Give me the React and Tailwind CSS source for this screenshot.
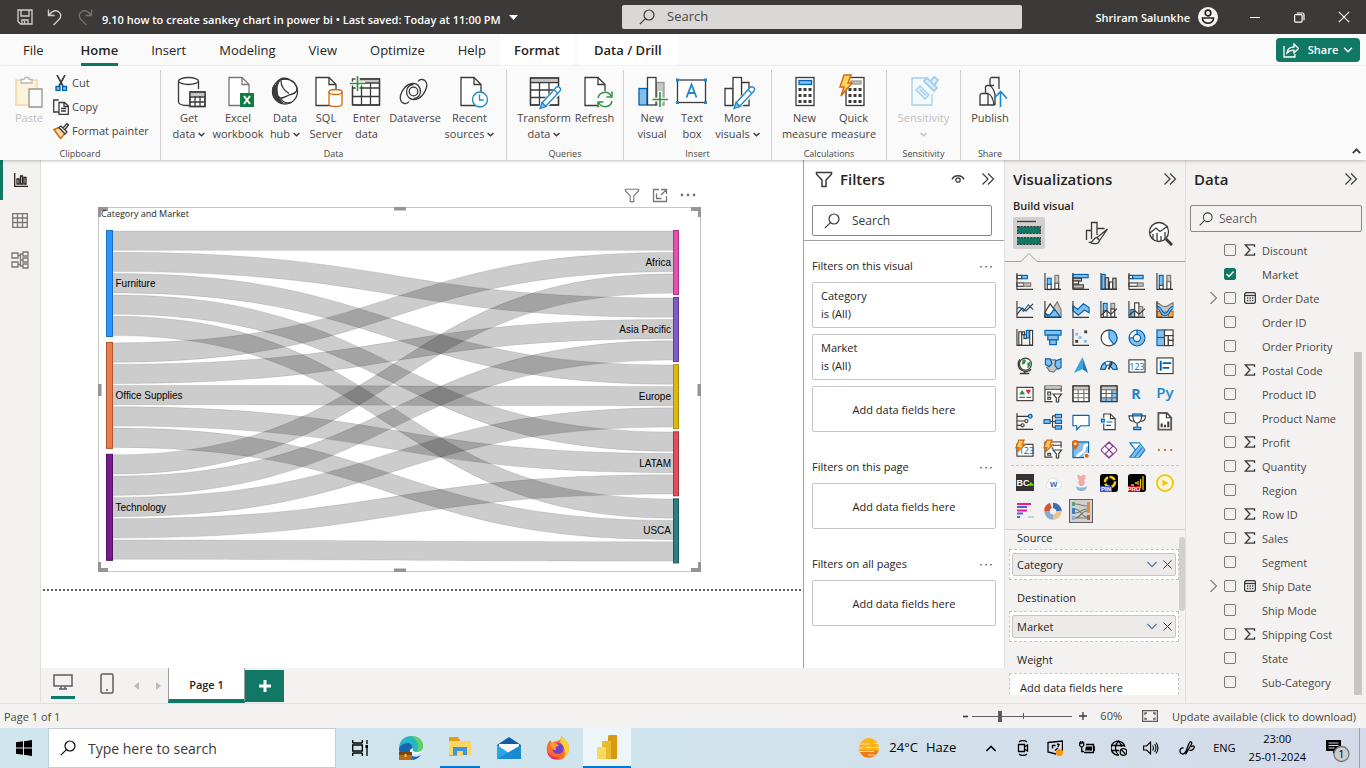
import React from "react";

const K = "#3b3a39";
const B = "#0063b1";
const L = "#83beec";
const G = "#c8c6c4";
const O = "#d8690a";

function Svg({ w = 18, h = w, vb, className = "", children, sw = 1.3, stroke = K }) {
  return (
    <svg
      width={w}
      height={h}
      viewBox={vb || `0 0 ${w} ${h}`}
      fill="none"
      stroke={stroke}
      strokeWidth={sw}
      className={`shrink-0 ${className}`}
      aria-hidden="true"
    >
      {children}
    </svg>
  );
}

const Chevron = ({ w = 7, h = 5, stroke = K, sw = 1.6, className }) => (
  <Svg w={w} h={h} vb="0 0 8 5" stroke={stroke} sw={sw} className={className}>
    <path d="M.7.7 4 4 7.3.7" />
  </Svg>
);

const DoubleChevron = () => (
  <Svg w={14} h={14} sw={1.2}>
    <path d="M1.500 1.500 7 7l-5.500 5.500M7 1.500 12.500 7 7 12.500" />
  </Svg>
);

const SearchIcon = ({ w = 16, stroke = K }) => (
  <Svg w={w} vb="0 0 16 16" stroke={stroke} sw={1.2}>
    <circle cx="10" cy="6" r="5" />
    <path d="M6.400 9.600.8 15.200" />
  </Svg>
);

const Funnel = ({ w = 18, stroke = K, sw = 1.5 }) => (
  <Svg w={w} vb="0 0 18 18" stroke={stroke} sw={sw}>
    <path d="M1.500 2.500h15v1.700L11 10v6.500H7V10L1.500 4.200z" />
  </Svg>
);

/* ---------- ribbon icons ---------- */

const Page = ({ x = 5, c = K }) => (
  <g stroke={c}>
    <path fill="#fff" d={`M${x} 1.500h13l7 7v21H${x}z`} />
    <path d={`M${x + 13} 1.500v7h7`} />
  </g>
);

const Pencil = () => (
  <g>
    <path d="M13 27 27.500 12.500a2.600 2.600 0 0 1 3.700 3.700L16.500 31l-5.200 1.500z" fill="#fafafa" stroke="#fafafa" strokeWidth="3" />
    <path d="M13 27 27 11.500a2.600 2.600 0 0 1 3.700 3.700L16.500 30.500z" fill="#fff" stroke="#1f86cc" />
    <path d="m13 26.500 4 4-6 2z" fill={L} stroke="#1f86cc" />
    <path d="m25 13.500 3.500 3.500" stroke="#1f86cc" />
  </g>
);

const Keypad = ({ x = 6 }) => (
  <g>
    <rect x={x} y="1.500" width="18" height="28" fill="#fff" />
    {[12, 18, 24].map((y) =>
      [3, 8, 13].map((dx) => (
        <rect key={`${y}-${dx}`} x={x + dx - 0.5} y={y} width="3" height="3" fill={K} stroke="none" />
      ))
    )}
  </g>
);

const ribbonIcons = {
  get: (
    <>
      <path d="M1.500 5v21c0 2 4 3.500 10.500 3.500M21.500 13V5" />
      <ellipse cx="11.500" cy="5" rx="10" ry="3.500" fill="#fff" />
      <rect x="13" y="16" width="15" height="14.500" fill="#fff" />
      <path d="M13 18.500h15" stroke={G} strokeWidth="3" />
      <path d="M13 16h15v14.500H13zM13 21h15M13 26h15M18 20v10M23 20v10" />
    </>
  ),
  excel: (
    <>
      <Page x={3} c="#797775" />
      <rect x="14" y="17" width="14" height="14" fill="#107c41" stroke="none" />
      <path d="m18 20 6 8M24 20l-6 8" stroke="#fff" strokeWidth="2" />
    </>
  ),
  hub: (
    <>
      <circle cx="15" cy="15.500" r="12.500" fill="#fff" />
      <path d="M13 1.500c5 0 6.500 1 8 3-4-1.500-8-1-10 0-3 2-4 7-3 13 .5 4 3 7 6 10C8 28 2 22.500 2 15.500c0-4 1-6 4-7 0-3 3-6.500 7-7z" fill={K} stroke="none" />
      <path d="M11 4.500c0 5 3 10 8 13M27 13.500c-1 5-5 4-9 6s-7 4-10 1.500M21 4.500c3 1 5.500 4 6 9M8.500 20c3 5.500 8 8.500 13 6" />
    </>
  ),
  sql: (
    <>
      <Page x={3} />
      <path d="M16 16v12c0 1.500 2.500 2.500 6.500 2.500S29 29.500 29 28V16z" fill="#fff" stroke={O} />
      <ellipse cx="22.500" cy="16" rx="6.500" ry="2.500" fill="#fff" stroke={O} />
    </>
  ),
  enter: (
    <>
      <rect x="2.500" y="3" width="27" height="26" fill="#fff" />
      <path d="M9 5h20" stroke={G} strokeWidth="3" />
      <path d="M2.500 29h27V3H10M2.500 12v17M2.500 20.500h27M2.500 12h27M11.500 7v22M20.500 7v22M10 7h20" />
      <path d="M7.500 0v16M0 7.500h15" stroke="#fafafa" strokeWidth="4" />
      <path d="M7.500 0v15M0 7.500h15" stroke="#2d9444" strokeWidth="1.600" />
    </>
  ),
  dataverse: (
    <>
      <circle cx="15.500" cy="15.500" r="4.300" />
      <path d="M15.500 8.500a7 7 0 0 0-7 7c0 5 3.500 8.500 8 8 6-.5 10.500-6 12-12 1-4-.5-7.500-4-8-2-.3-3.500.5-4.500 2" />
      <path d="M15.500 22.500a7 7 0 0 0 7-7c0-5-3.500-8.500-8-8-6 .5-10.500 6-12 12-1 4 .5 7.500 4 8 2 .3 3.500-.5 4.500-2" />
    </>
  ),
  recent: (
    <>
      <Page x={3} />
      <circle cx="22" cy="23.500" r="7.500" fill="#fff" stroke="#1f86cc" />
      <path d="M21.500 18.500v5.500h4" stroke="#1f86cc" />
    </>
  ),
  transform: (
    <>
      <rect x="1.500" y="2" width="28" height="27" fill="#fff" />
      <path d="M2 4h27" stroke={G} strokeWidth="3" />
      <path d="M1.500 2h28v27h-28zM1.500 6.500h28M1.500 14h28M1.500 21.500h28M10.500 6.500v22.500M20 6.500v22.500" />
      <Pencil />
    </>
  ),
  refresh: (
    <>
      <Page x={2} />
      <circle cx="22" cy="23.500" r="8.500" fill="#fafafa" stroke="none" />
      <path d="M15 22a7 7 0 0 1 13-2M29 15.500V21h-5.500M29 25a7 7 0 0 1-13 2M15 31.500V26h5.500" stroke="#2d9444" strokeWidth="1.500" />
    </>
  ),
  visual: (
    <>
      <rect x="19" y="6.500" width="8" height="22.500" fill={G} stroke="#979593" />
      <rect x="2" y="12.500" width="8" height="16.500" fill={L} stroke={B} />
      <rect x="10.500" y="1.500" width="8.500" height="27.500" fill="#fff" />
      <path d="M23 15v16M15 23.500h16" stroke="#fafafa" strokeWidth="4" />
      <path d="M23 16v15M15.500 23.500H31" stroke="#2d9444" strokeWidth="1.600" />
    </>
  ),
  text: (
    <>
      <rect x="1.500" y="4" width="28" height="22.500" fill="#fff" />
      {[[0, 2.500], [28, 2.500], [0, 25], [28, 25]].map(([x, y]) => (
        <rect key={`${x}${y}`} x={x} y={y} width="3" height="3" fill="#1f86cc" stroke="none" />
      ))}
      <path d="M10.500 21.500 15.500 8.500l5 13M12.300 17h6.400" stroke="#1f86cc" strokeWidth="1.800" />
    </>
  ),
  more: (
    <>
      <path d="M2 12.500h8v17H2zM18.500 6.500h7.500v23h-7.500z" fill="#fff" />
      <rect x="10" y="1.500" width="8.500" height="28" fill="#fff" />
      <Pencil />
    </>
  ),
  measure: (
    <>
      <Keypad />
      <rect x="9" y="4.500" width="12.500" height="4" fill={L} stroke={B} />
    </>
  ),
  quick: (
    <>
      <Keypad x={7} />
      <rect x="12" y="5" width="10" height="3" fill={G} stroke="#979593" />
      <path d="M5-1h7L9 7h4L2 20l3-9H1z" fill="#fdd663" stroke={O} strokeWidth="1.500" />
    </>
  ),
  sensitivity: (
    <g stroke="#a6cfe8">
      <path d="M17 2H3v27h20V18" fill="#f3f9fd" />
      <path d="m11 10 9 9-4 4-9-9zM11 13.500l6 6" fill="#e1f0fa" />
      <path d="m15 5 10 10 3-3L18 2zM21 6l4-5 4 3-4 6" fill="#e1f0fa" strokeWidth="2" />
    </g>
  ),
  publish: (
    <>
      <path d="M2 19.500a2 2 0 0 1 2-2h6v11.500H2zM7.500 17.500v-6a2 2 0 0 1 2-2h6.500M12 9.500v-6a2 2 0 0 1 2-2h7V13M10 17.500c3 1 5 4 6 11.500H4M11 9.500c3 1 5 4 6 9V29" />
      <path d="M22.500 31V16M16 22.500l6.500-7 6.500 7" stroke="#1f86cc" strokeWidth="1.600" />
    </>
  ),
};

const ICON_VIEW = {
  get: "-4 0 32 33",
  excel: "-4 0 32 33",
  sql: "-3 0 32 33",
  recent: "-4 0 32 33",
  refresh: "-4 0 32 33",
  publish: "-4 0 32 33",
  enter: "1 0 32 33",
  dataverse: "1 0 32 33",
  text: "0 0 32 33",
};

const ribbonGroups = [
  {
    name: "Data",
    pad: "pl-1 pr-[9px]",
    items: [
      ["get", "w-12", "Get", "data", true],
      ["excel", "w-[50px]", "Excel", "workbook"],
      ["hub", "w-11", "Data", "hub", true],
      ["sql", "w-[38px]", "SQL", "Server"],
      ["enter", "w-[43px]", "Enter", "data"],
      ["dataverse", "w-[54px]", "Dataverse", ""],
      ["recent", "w-[55px]", "Recent", "sources", true],
    ],
  },
  {
    name: "Queries",
    pad: "pl-[9px] pr-[6px]",
    items: [
      ["transform", "w-14", "Transform", "data", true],
      ["refresh", "w-[45px]", "Refresh", ""],
    ],
  },
  {
    name: "Insert",
    pad: "px-2",
    items: [
      ["visual", "w-10", "New", "visual"],
      ["text", "w-10", "Text", "box"],
      ["more", "w-[51px]", "More", "visuals", true],
    ],
  },
  {
    name: "Calculations",
    pad: "px-2",
    items: [
      ["measure", "w-[49px]", "New", "measure"],
      ["quick", "w-[49px]", "Quick", "measure"],
    ],
  },
  { name: "Sensitivity", pad: "px-1", items: [["sensitivity", "w-[65px]", "Sensitivity", "", true, true]] },
  { name: "Share", pad: "px-1", items: [["publish", "w-[50px]", "Publish", ""]] },
];

function RibbonButton({ icon, width, a, b, drop, off }) {
  return (
    <button
      disabled={off}
      className={`flex shrink-0 flex-col items-center whitespace-nowrap text-[11px] leading-4 ${width} ${off ? "text-[#c0bebc]" : "text-[#484644]"}`}
    >
      <Svg w={32} h={33} vb={ICON_VIEW[icon] || "-1 0 32 33"} className="mb-px overflow-visible">
        {ribbonIcons[icon]}
      </Svg>
      <span>{a}</span>
      <span className="flex h-4 items-center gap-[3px]">
        {b}
        {drop && <Chevron stroke={off ? "#c0bebc" : K} />}
      </span>
    </button>
  );
}

function TitleBar() {
  return (
    <header className="flex h-[34px] shrink-0 items-center bg-[#3b3a39] text-white">
      <div className="flex w-[622px] shrink-0 items-center">
        <button aria-label="Save" className="ml-[17px]">
          <Svg w={16} stroke="#d2d0ce">
            <path d="M1 1h14v14H3.500L1 12.500zM4 1v6h8V1M5 15v-4h6v4M7.500 12v3" />
          </Svg>
        </button>
        <button aria-label="Undo" className="ml-[14px]">
          <Svg w={16} h={18} stroke="#d2d0ce" sw={1.4}>
            <path d="M1.500 1.500v6h6M1.800 7.300C5 3 8.500 2 11 3.300c3.500 1.900 3.500 5.700 1 8.200L6.500 17" />
          </Svg>
        </button>
        <button aria-label="Redo" disabled className="mr-[9px] ml-[14px]">
          <Svg w={16} h={18} stroke="#72706e" sw={1.4}>
            <path d="M14.500 1.500v6h-6M14.200 7.300C11 3 7.500 2 5 3.300c-3.500 1.900-3.500 5.700-1 8.200L9.500 17" />
          </Svg>
        </button>
        <span className="pt-[6px] text-[11px] font-semibold whitespace-nowrap">
          9.10 how to create sankey chart in power bi • Last saved: Today at 11:00 PM
        </span>
        <Svg w={9} h={5} className="ml-2">
          <path d="M0 0h9L4.500 5z" fill="#fff" stroke="none" />
        </Svg>
      </div>
      <label className="flex h-6 w-[400px] items-center gap-3 rounded-[2px] bg-[#d9d8d7] px-[17px]">
        <SearchIcon w={16} />
        <input aria-label="Search" placeholder="Search" className="w-full bg-transparent text-[13px] text-black outline-none placeholder:text-[#484644]" />
      </label>
      <div className="ml-auto flex items-center">
        <span className="pt-[2px] text-[11px] font-semibold whitespace-nowrap">Shriram Salunkhe</span>
        <Svg w={20} className="ml-2">
          <circle cx="10" cy="10" r="10" fill="#f3f2f1" stroke="none" />
          <circle cx="10" cy="6" r="2.800" stroke="#252423" strokeWidth="1.700" />
          <path d="M4.500 11h11c0 7-11 7-11 0z" stroke="#252423" strokeWidth="1.700" />
        </Svg>
        <button aria-label="Minimize" className="ml-8">
          <Svg w={10} stroke="#fff" sw={1}><path d="M0 5.500h10" /></Svg>
        </button>
        <button aria-label="Restore" className="ml-[34px]">
          <Svg w={11} stroke="#fff" sw={1.2}>
            <rect x=".6" y="2.600" width="7.500" height="7.500" rx="1" />
            <path d="M2.800 1h5.500c1.200 0 1.700.6 1.700 1.700v5.500" />
          </Svg>
        </button>
        <button aria-label="Close" className="mr-4 ml-[33px]">
          <Svg w={12} stroke="#fff" sw={1.2}><path d="m.8.8 10.400 10.400M11.200.8.8 11.200" /></Svg>
        </button>
      </div>
    </header>
  );
}

const tabs = ["File", "Home", "Insert", "Modeling", "View", "Optimize", "Help"];

function TabRow() {
  return (
    <nav className="flex h-8 shrink-0 items-center bg-[#fafafa] text-[13px] text-[#252423]">
      <div className="flex h-full items-center gap-[33px] pr-[14px] pl-[23px]">
        {tabs.map((t) => (
          <button
            key={t}
            className={`h-8 ${t === "Home" ? "ml-1 border-b-[3px] border-[#117865] pt-1 font-semibold" : "pt-px"}`}
          >
            {t}
          </button>
        ))}
      </div>
      <button className="h-full w-[74px] bg-white pt-px font-semibold">Format</button>
      <button className="ml-1 h-full w-[100px] bg-white pt-px font-semibold">Data / Drill</button>
      <button className="mr-[6px] ml-auto flex h-6 w-[84px] items-center justify-center gap-[5px] rounded bg-[#117865] text-[11px] font-semibold text-white">
        <Svg w={16} h={15} stroke="#fff" className="mr-1">
          <path d="M1 3v11h11v-3M4 10c.5-4 3-6 7-6V1l4.500 4.500L11 10V7.200C8 7 6 7.800 4 10z" />
        </Svg>
        Share
        <Chevron w={10} h={6} stroke="#fff" sw={1.1} />
      </button>
    </nav>
  );
}

function Ribbon() {
  return (
    <section aria-label="Home ribbon" className="relative z-10 flex h-[94px] shrink-0 bg-[#fafafa] pt-1 text-[11px] text-[#484644] shadow-[0_1px_3px_rgba(0,0,0,0.25)]">
      <div className="flex w-[161px] shrink-0 flex-col border-r border-[#d2d0ce]">
        <div className="flex min-h-0 flex-1">
          <button disabled className="flex w-[53px] flex-col items-center pt-[6px] pl-[5px] leading-4 text-[#c0bebc]">
            <Svg w={30} h={32} className="mb-[2px]">
              <path d="M2 4h21v25H2z" fill="#fdf3dc" stroke="#f6d3a0" strokeWidth="1.500" />
              <path d="M7 3.500h3c0-3 5-3 5 0h3V7H7z" fill="#fff" stroke="#bab8b7" />
              <path d="M15 13h13v18H15z" fill="#fafafa" stroke="#979593" />
            </Svg>
            Paste
          </button>
          <div className="flex flex-col pt-px">
            {[
              ["Cut", <>
                <path d="M4 0l6 11M12 0 6 11" strokeWidth="1.600" />
                <path d="M3 11.500h4v3.800H3zM9.500 11.500h4v3.800h-4z" fill={L} stroke={B} />
              </>],
              ["Copy", <path d="M6 13H.7V1h5M6 3.500h5.500L15.300 7v8.300H6zM11 3.500V7.500h4M8 9.500h5M8 12h5" />],
              ["Format painter", <>
                <path d="m1 6.500 5-2 6 6-4.500 5z" fill="#fdd9a5" stroke={O} strokeWidth="1.500" />
                <path d="m6 4.500 2-1.500 6 6-2 2zM10 5l4-4.500 1.500 1.500L12 6.500" fill="#fff" />
              </>],
            ].map(([name, icon]) => (
              <button key={name} className="flex h-6 items-center gap-[3px]">
                <Svg w={16}>{icon}</Svg>
                {name}
              </button>
            ))}
          </div>
        </div>
        <div className="h-3 text-center text-[9px] leading-3">Clipboard</div>
      </div>
      {ribbonGroups.map((g) => (
        <div key={g.name} className="flex shrink-0 flex-col border-r border-[#d2d0ce]">
          <div className={`flex min-h-0 flex-1 items-start pt-[6px] ${g.pad}`}>
            {g.items.map(([icon, width, a, b, drop, off]) => (
              <RibbonButton key={icon} {...{ icon, width, a, b, drop, off }} />
            ))}
          </div>
          <div className="h-3 text-center text-[9px] leading-3">{g.name}</div>
        </div>
      ))}
      <button aria-label="Collapse ribbon" className="mt-auto mr-[5px] mb-[6px] ml-auto">
        <Chevron w={9} h={6} className="rotate-180" />
      </button>
    </section>
  );
}

/* ---------- report canvas ---------- */

const sources = [
  ["Furniture", "#2996ff", "#1a6fc2"],
  ["Office Supplies", "#e67c4f", "#b35529"],
  ["Technology", "#7a1a8c", "#520f60"],
];
const targets = [
  ["Africa", "#e252b0", "#b33388"],
  ["Asia Pacific", "#7f5cc6", "#5a3d9c"],
  ["Europe", "#dcb910", "#a88d08"],
  ["LATAM", "#dc515d", "#a93440"],
  ["USCA", "#2b7d86", "#17575e"],
];
const X0 = 15;
const X1 = 575;
const T = 19.3;

const ribbons = sources.flatMap((_, s) =>
  targets.map((_, t) => {
    const a = 24 + s * 111.9 + t * 21.3;
    const b = 24 + t * 67 + s * 21.4;
    const m = (X0 + X1) / 2;
    return {
      key: `${s}-${t}`,
      area: `M${X0} ${a}C${m} ${a} ${m} ${b} ${X1} ${b}V${b + T}C${m} ${b + T} ${m} ${a + T} ${X0} ${a + T}Z`,
      edges: `M${X0} ${a}C${m} ${a} ${m} ${b} ${X1} ${b}M${X1} ${b + T}C${m} ${b + T} ${m} ${a + T} ${X0} ${a + T}`,
    };
  })
);

function Sankey() {
  return (
    <svg viewBox="0 0 603 365" className="block h-auto w-full" role="img" aria-label="Category and Market sankey chart">
      <rect x=".5" y=".5" width="602" height="364" fill="none" stroke="#c8c6c4" />
      {ribbons.map((r) => (
        <g key={r.key} fill="none">
          <path d={r.area} fill="#000" fillOpacity=".2" />
          <path d={r.edges} stroke="#000" strokeOpacity=".1" />
        </g>
      ))}
      {sources.map(([name, c, e], i) => (
        <g key={name}>
          <rect x="8.500" y={23.5 + i * 111.9} width="6" height="106" fill={c} stroke={e} />
          <text x="17.500" y={80 + i * 112} fontFamily="Liberation Sans, Arial, sans-serif" fontSize="10">{name}</text>
        </g>
      ))}
      {targets.map(([name, c, e], i) => (
        <g key={name}>
          <rect x="575.500" y={23.5 + i * 67.1} width="5" height="64" fill={c} stroke={e} />
          <text x="573" y={59 + i * 67} textAnchor="end" fontFamily="Liberation Sans, Arial, sans-serif" fontSize="10">{name}</text>
        </g>
      ))}
      <g stroke="#979593" strokeWidth="4" fill="none">
        <path d="M1 10V2h9M593 2h9v8M1 355v8h9M593 363h9v-8" />
        <path d="M296 1.500h12M296 363.500h12M1.500 177v12M601.500 177v12" />
      </g>
    </svg>
  );
}

function Canvas() {
  return (
    <div className="flex-1 overflow-hidden bg-white">
      <div className="ml-[57px] w-[603px] pt-[25px]">
        <div className="mb-[2px] flex h-5 items-center justify-end gap-3 pr-[5px]">
          <button aria-label="Filters on visual"><Funnel w={16} stroke="#797775" sw={1.3} /></button>
          <button aria-label="Focus mode">
            <Svg w={16} stroke="#797775">
              <path d="M7 2.500H1.500v12h13V9M9 2.500h5.500V7M14.300 2.700 9 8M4.500 6.500v5h5" />
            </Svg>
          </button>
          <button aria-label="More options">
            <Svg w={16}>
              {[2, 8, 14].map((x) => <circle key={x} cx={x} cy="8" r="1.400" fill="#797775" stroke="none" />)}
            </Svg>
          </button>
        </div>
        <div className="relative">
          <h2 className="absolute top-[1px] left-[3px] text-[9px] leading-3 font-medium text-[#252423]">Category and Market</h2>
          <Sankey />
        </div>
      </div>
      <div className="mx-[2px] mt-[17px] border-t-2 border-dotted border-[#605e5c]" />
    </div>
  );
}

function PageTabs() {
  return (
    <div className="flex h-[35px] shrink-0 bg-[#f3f2f1]">
      <button aria-label="Desktop layout" className="mb-1 ml-[10px] flex w-6 flex-col items-center justify-between border-b-[3px] border-[#117865] pt-[6px]">
        <Svg w={20} h={16} stroke="#605e5c" sw={1.5}>
          <path d="M1 1h18v11H1zM6 15h8M8 12v3M12 12v3" />
        </Svg>
      </button>
      <button aria-label="Mobile layout" className="mb-2 ml-[25px] pt-1">
        <Svg w={14} h={21} stroke="#605e5c" sw={1.5}>
          <rect x="1" y="1" width="12" height="19" rx="1.500" /><path d="M6 17h2" />
        </Svg>
      </button>
      <Svg w={5} h={8} className="mt-[14px] ml-[20px]"><path d="M5 0v8L0 4z" fill="#bdbbb9" stroke="none" /></Svg>
      <Svg w={5} h={8} className="mt-[14px] mr-[7px] ml-[17px]"><path d="M0 0v8l5-4z" fill="#bdbbb9" stroke="none" /></Svg>
      <button className="w-[77px] border-x border-b-4 border-x-[#a19f9d] border-b-[#117865] bg-white pt-1 text-[11px] font-semibold text-[#252423]">
        Page 1
      </button>
      <button aria-label="New page" className="mt-[2px] mb-px flex w-[39px] items-center justify-center bg-[#117865]">
        <Svg w={12} stroke="#fff" sw={3}><path d="M6 0v12M0 6h12" /></Svg>
      </button>
    </div>
  );
}

/* ---------- panes ---------- */

const Dots = () => (
  <button aria-label="More options" className="mr-1">
    <Svg w={12} h={4}>
      {[1, 6, 11].map((x) => <rect key={x} x={x - 0.7} y="2" width="1.400" height="1.400" fill="#484644" stroke="none" />)}
    </Svg>
  </button>
);

const AddCard = () => (
  <div className="flex h-[46px] items-center justify-center rounded-[2px] border border-[#c8c6c4] pt-[2px] text-[11px]">Add data fields here</div>
);

function FilterSection({ title, cards = [] }) {
  return (
    <section className="mb-[27px] flex flex-col gap-[6px]">
      <h3 className="mb-[2px] flex h-4 items-center justify-between text-[11px] leading-4">{title}<Dots /></h3>
      {cards.map((c) => (
        <div key={c} className="h-[46px] rounded-[2px] border border-[#c8c6c4] px-2 pt-1 text-[11px] leading-[18px]">
          {c}<br />is (All)
        </div>
      ))}
      <AddCard />
    </section>
  );
}

function FiltersPane() {
  return (
    <aside className="flex w-[202px] shrink-0 flex-col border-x border-l-[#a19f9d] border-r-[#e1dfdd] bg-white text-[#252423]">
      <div className="flex h-[38px] items-center pr-[9px] pl-[11px]">
        <Funnel />
        <h2 className="ml-[7px] text-[15px] font-semibold">Filters</h2>
        <button aria-label="Show filters" className="ml-auto">
          <Svg w={14} h={12}><path d="M1 6.500c2-5 10-5 12 0" /><circle cx="7" cy="7" r="2.200" /></Svg>
        </button>
        <button aria-label="Collapse filters" className="ml-4"><DoubleChevron /></button>
      </div>
      <div className="border-b border-[#a19f9d] px-2 pt-[7px] pb-1">
        <label className="flex h-[31px] w-[180px] items-center gap-3 rounded-[2px] border border-[#8a8886] px-[11px]">
          <SearchIcon />
          <input aria-label="Search filters" placeholder="Search" className="w-full bg-transparent text-xs outline-none placeholder:text-[#3b3a39]" />
        </label>
      </div>
      <div className="px-2 pt-[17px]">
        <FilterSection title="Filters on this visual" cards={["Category", "Market"]} />
        <FilterSection title="Filters on this page" />
        <FilterSection title="Filters on all pages" />
      </div>
    </aside>
  );
}

const axes = <path d="M1 0v17.300h17" />;
const bolt = <path d="M3-1h5.500L6.500 4h3L1 12l2-5H0z" fill="#fdc663" stroke={O} strokeWidth="1.300" />;
const R = (x, y, w, h, f = "#fff", s = K) => (
  <rect key={`${x}-${y}-${w}`} x={x} y={y} width={w} height={h} fill={f} stroke={s} />
);
const T123 = ({ x }) => (
  <text x={x} y="13.200" textAnchor="middle" fontSize="9.500" fontFamily="Open Sans, sans-serif" fill={B} stroke="none">123</text>
);

const vizIcons = [
  <>{R(1, 2.5, 5, 3.5)}{R(6, 2.5, 6, 3.5, L, B)}{R(1, 10.5, 7, 3.5)}{R(8, 10.5, 7.5, 3.5, G, "#797775")}{axes}</>,
  <>{R(3.5, 12, 4, 5.5)}{R(3.5, 5.5, 4, 6.5, L, B)}{R(11.5, 10.5, 4, 6.5)}{R(11.5, 2.5, 4, 8, G, "#797775")}{axes}</>,
  <>{R(1, 1.5, 16, 3.5, L, B)}{R(1, 5.5, 9, 3, G)}{R(1, 8.500, 6, 3)}{R(1, 12.5, 11, 3.5, G)}{axes}</>,
  <>{R(2, 1.5, 3.5, 15.5, L, B)}{R(5.5, 5, 3.5, 12, G)}{R(10, 9.5, 3.5, 7.5)}{R(13.5, 5.5, 3.5, 11.5, G)}{axes}</>,
  <>{R(1, 2.5, 4, 3.5)}{R(5, 2.5, 11, 3.5, L, B)}{R(1, 10.5, 9, 3.5)}{R(10, 10.5, 6, 3.5, G, "#797775")}{axes}</>,
  <>{R(3.5, 13, 4, 4)}{R(3.5, 2.5, 4, 10.5, L, B)}{R(11.5, 9, 4, 8)}{R(11.5, 2.5, 4, 6.5, G, "#797775")}{axes}</>,
  <>{axes}<path d="m1 8 3-1.500 4 4.500L13 4l5 5" stroke={B} /><path d="m1 14 5.500-6.500 4 3L18 3" /></>,
  <><path d="M10 7 14 1l4 8v8h-7z" fill={G} stroke="#797775" /><path d="m1 12 5.500-9L13 12l-4 5H1z" fill="#fff" /><path d="m1 13 4 4h12.500L11 8.500 6 15z" fill={L} stroke={B} />{axes}</>,
  <><path d="m1 5 5 4 6-6 6 4v5.500l-5-3L6.500 15 1 10z" fill={L} stroke={B} />{axes}</>,
  <>{R(3.5, 2.5, 4, 8, L, B)}{R(3.5, 10.5, 4, 6.5)}{R(11.5, 2.5, 4, 6, G, "#797775")}{R(11.5, 8.5, 4, 8.5)}<path d="m1 15 6-5 4.500 4L18 8" />{axes}</>,
  <>{R(3, 9, 4, 8, L, B)}{R(7, 2, 4.500, 15)}{R(11.500, 6, 4, 11, G, "#797775")}<path d="m1 15 6-5 4.500 4L18 8" />{axes}</>,
  <><path d="M1 11h5v6H1zM13 11h5v6h-5z" fill="#f7a64a" stroke={O} /><path d="M1 2c3.500 0 4 4 8.500 4S15 2 18 2v5c-4 0-4 5-8.500 5S6 7 1 7z" fill={G} stroke="#797775" /><path d="M1.500 7c4 0 3.500 7.500 8 7.500S14 7 18 7" stroke={B} strokeWidth="3.500" /><path d="M1.500 7c4 0 3.500 7.500 8 7.500S14 7 18 7" stroke={L} strokeWidth="1.300" />{axes}</>,
  <>{R(3, 3, 3, 14)}{R(6.500, 3, 2.500, 3)}{R(8.500, 6, 2.500, 4)}{R(11, 1.500, 3, 8, L, B)}{R(14.500, 1.500, 3, 15.500)}{axes}</>,
  <>{R(1, 1.500, 17, 5, L, B)}{R(4, 6.5, 11, 5, L, B)}{R(6, 11.5, 7, 5, L, B)}</>,
  <>{axes}{[[5, 13, K], [5, 5.5, L], [8.5, 9, L], [14.5, 3, K], [14, 13, L]].map(([x, y, c]) => <rect key={x + "" + y} x={x - 1.5} y={y - 1.5} width="3" height="3" fill={c} stroke="none" />)}</>,
  <><circle cx="9.500" cy="9.500" r="8.300" fill="#fff" /><path d="M9.500 1.200a8.300 8.300 0 0 1 5 15L9.500 9.500z" fill={L} stroke={B} /></>,
  <><circle cx="9.500" cy="9.500" r="6.200" stroke={L} strokeWidth="4.500" /><path d="M3.400 9A6.200 6.200 0 0 1 9 3.300" stroke="#fff" strokeWidth="4.500" /><circle cx="9.500" cy="9.500" r="8.400" stroke={B} /><circle cx="9.500" cy="9.500" r="3.800" stroke={B} /><path d="M9.500 1v4.500M1 9.500h4.500" stroke={B} /></>,
  <>{R(1, 1, 8, 16.500, L, B)}{R(9, 1, 9, 6)}{R(9, 7, 4, 10.500)}{R(13, 7, 5, 5)}{R(13, 12, 5, 5.500)}<path d="M1 9h8" stroke={B} /></>,
  <><circle cx="10" cy="7.500" r="6.300" fill="#fff" /><path d="M7 3c3-2 4 1 3 3s-3 1-4 3zM12 6l3-1c1 4-1 6-3 7z" fill="#2d9444" stroke="none" /><path d="M4 2.500c-3 4-2 9 2 11.500s8 1 10-1M9 15v2.500M4 17.500h10" strokeWidth="1.500" /></>,
  <><path d="M7 3h5v5l2 4-4 4-4-1-3-4 4-2z" fill={G} stroke="#797775" /><path d="M1.500 2h5l2 5-3 3-4-2zM12.500 4 18 2v9l-3 2-3.500-4z" fill={L} stroke={B} /></>,
  <><path d="M11 0 2 17l9-4z" fill="#33a7dd" stroke="none" /><path d="m11 0 6 17-6-4z" fill="#1a7ab8" stroke="none" /></>,
  <><path d="M1 13a8.500 8.500 0 0 1 17 0h-4a4.500 4.500 0 0 0-9 0z" fill="#fff" /><path d="M1 13a8.500 8.500 0 0 1 4-7l2 4-2 3zM11 5c4 0 7 4 7 8h-4l-4-4z" fill={L} stroke={B} /><path d="M9 13 13 5" strokeWidth="2" /></>,
  <>{R(1, 3, 17, 13)}<T123 x="9.500" /></>,
  <>{R(1, 1, 17, 16.5)}<path d="M5 4v10.500M7 6.500h9M7 11.500h7" stroke={B} strokeWidth="2" /></>,
  <>{R(1, 2.5, 17, 14)}<path d="m6.500 5-3 5h6z" fill="#2d9444" stroke="none" /><path d="m13 10-3-5h6z" fill="#d13438" stroke="none" /><path d="M3.500 13h6M11 13h5" strokeWidth="1" /></>,
  <><path d="M9 17.500H1V1h17v6" fill="#fff" /><path d="M1.500 2.500h16" stroke={G} strokeWidth="2.500" /><path d="M1 4.500h17M4 7.500h3v3H4zM4 13h3v2H4z" /><path d="M9.500 9.500h9l-3 4V18H13v-4.500z" fill="#fff" /></>,
  <>{R(1, 1, 17, 16.5)}<path d="M2 3h15" stroke={G} strokeWidth="3" /><path d="M1 5h17M1 9h17M1 13.500h17M6.500 5v12.500M12.500 5v12.500" stroke="#797775" />{R(1, 1, 17, 16.5, "none")}</>,
  <>{R(1, 1, 17, 16.5)}<path d="M2 3h15" stroke={G} strokeWidth="3" /><path d="M12.500 5H18v12.500h-5.500zM2 13.500h11v3.500H2z" fill={L} stroke="none" /><path d="M1 5h17M1 9h17M1 13.500h17M6.500 5v12.500M12.500 5v12.500" stroke="#605e5c" />{R(1, 1, 17, 16.5, "none")}</>,
  <text x="8.500" y="15" textAnchor="middle" fontSize="15" fontWeight="700" fontFamily="Open Sans, sans-serif" fill="#1f86cc" stroke="none">R</text>,
  <text x="9.500" y="14" textAnchor="middle" fontSize="16" fontWeight="600" fontFamily="Open Sans, sans-serif" fill="#1f86cc" stroke="none">Py</text>,
  <>{axes}<path d="M1 3.500h13M1 8.500h9M1 13h6" /><circle cx="15" cy="3.500" r="2" fill={L} stroke={B} /><circle cx="11" cy="8.500" r="1.600" fill="#fff" /><circle cx="7" cy="13" r="1.600" fill="#fff" /></>,
  <><path d="M6 9h6M9 3v12M9 3h3M9 15h3" />{R(0, 7, 6.500, 4, L, B)}{R(12, 1.5, 6.500, 3.500, L, B)}{R(12, 7.500, 6.500, 3.500, L, B)}{R(12, 13.500, 6.500, 3.500, L, B)}</>,
  <path d="M1 2.500h17v11H9l-4 4v-4H1z" fill="#fff" stroke={B} />,
  <><path d="M4 5V1h7l5 5v11.500H4V11" fill="#fff" /><path d="M11 1v5h5" /><path d="M7 9.500h6M6.500 13h5" stroke={B} />{R(1.500, 6.500, 3, 3, L, B)}</>,
  <><path d="M5 1.500h9.500c0 6-1 9-4.700 9S5 7.500 5 1.500zM5 3H1c0 4 2 6 5 6M14.500 3h4c0 4-2 6-5 6M9.700 10.500V15" fill="#fff" /><path d="M5 1h9.500v2H5zM6 15h7.500v2.500H6z" fill={L} stroke={B} /></>,
  <><path d="M2.500 0h9l4.500 5v12.500H2.500z" fill="#fff" stroke="#605e5c" strokeWidth="2" /><path d="M11 0v5h5" /><path d="M6 15v-4M9.500 15v-2.500M13 15V9" strokeWidth="2.200" /></>,
  <>{R(1, 3.5, 17, 12.500)}<T123 x="11" />{bolt}</>,
  <><path d="M9 17H1V1h17v6" fill="#fff" /><path d="M8 4.500h10M4 13h3v2H4zM8 7.500h2" /><path d="M9.500 9.500h9l-3 4V18H13v-4.500z" fill="#fff" />{bolt}</>,
  <>{R(1, 1, 16.500, 16.500, L, B)}<path d="M6 17c0-5 8-4 7-9 0-3 2-4 4-4" stroke="#fff" strokeWidth="3" /><path d="M3.500-1c4 0 4 4 3 6l-3 5-3-5c-1-2-1-6 3-6z" fill={O} stroke="none" /><circle cx="3.500" cy="3" r="1.400" fill="#fff" stroke="none" /><circle cx="15.500" cy="15.500" r="2.700" fill={O} stroke="#f3f2f1" /></>,
  <><path d="m9.500 1 7.500 7q1.500 1.500 0 3l-7.500 7L2 11Q.5 9.500 2 8z" fill="#fff" stroke="#8b3a97" /><path d="m5.500 5.500 8 8M13.500 5.500l-8 8M9.500 1.500l4 4-4 4-4-4zM9.500 9.500l4 4-4 4-4-4z" stroke="#8b3a97" /></>,
  <><path d="M2 2h10l6 7.500-6 7.500H2l6-7.500z" fill="#fff" stroke="#1f86cc" /><path d="m4 16 9-12 4.500 5.500L11.500 17z" fill={L} stroke="none" /><path d="m2 17 10.500-13M7 17l8-10M2 2l6 7.500M12 17l5-7" stroke="#1f86cc" /></>,
  <>{[3, 9.5, 16].map((x) => <rect key={x} x={x - 1} y="8.500" width="2" height="2" fill={O} stroke="none" />)}</>,
];

const badge = (fill, label) => (
  <>
    <rect y="12" width="12" height="6" fill={fill} stroke="none" />
    <text x="6" y="17.300" textAnchor="middle" fontSize="6" fontWeight="700" fontFamily="Liberation Sans, Arial" fill="#fff" stroke="none">{label}</text>
  </>
);

const customIcons = [
  <><rect x="0" y="0" width="18" height="17" fill="#333" stroke="none" /><text x="7" y="12" textAnchor="middle" fontSize="9" fontWeight="700" fontFamily="Liberation Sans, Arial" fill="#fff" stroke="none">BC</text><path d="m13 11 2-2 2 2z" fill="#5ee000" stroke="#5ee000" /></>,
  <><path d="M5 15a4 4 0 0 1-1-7c0-4 7-6 9-1 5 0 6 7 1 8z" fill="#fff" stroke="#dfe6ec" /><text x="9.500" y="13" textAnchor="middle" fontSize="9" fontWeight="700" fontFamily="Open Sans, sans-serif" fill="#4a78b5" stroke="none">w</text></>,
  <><path d="M5.500 1h2l1.500 1.500L10.500 1h3v3L12 6.500 13 9l-2 3H8L6 9l1-2.500L5.500 4z" fill="#f2aaa2" stroke="none" /><path d="M4 12c2 2 9 2 11 0 0 3-2 5-5.500 5S4 15 4 12z" fill="#8fb4d9" stroke="none" /></>,
  <><rect width="18" height="18" rx="3" fill="#000" stroke="none" /><circle cx="10" cy="8" r="5" stroke="#f2c811" strokeWidth="2.500" strokeDasharray="6 1.500" />{badge("#2458d8", "PIN")}</>,
  <><rect width="18" height="18" rx="3" fill="#000" stroke="none" /><path d="M3 11h3M7 9h2M10 7v4M12.500 5v9M15 2v14" stroke="#f2c811" strokeWidth="1.300" />{badge("#e3000f", "PRO")}</>,
  <><circle cx="9" cy="9" r="8" stroke="#f2c811" strokeWidth="2" fill="#fdf8df" /><path d="M7 6.500v5L11.500 9z" fill="#f2c811" stroke="#f2c811" /></>,
  <g strokeWidth="1.800"><path d="M1 2h14M1 8.500h10" stroke="#ec1e8c" /><path d="M1 5h10M1 11.500h6M1 15h3" stroke="#5b5be6" /><path d="M12 15h6" stroke="#a5dccd" /></g>,
  <g strokeWidth="5.500"><path d="M9 3.500A6 6 0 0 1 15 9" stroke="#3a6fb0" /><path d="M15 9a6 6 0 0 1-6 6" stroke="#ecc38a" /><path d="M9 15a6 6 0 0 1-6-6" stroke="#8aaed0" /><path d="M3 9a6 6 0 0 1 6-6" stroke="#d1533a" strokeDasharray="7 3" /></g>,
];

const SankeyGlyph = () => (
  <Svg w={20} vb="0 0 20 20">
    <path d="M4 3c6 0 6 2 12 2M4 8c6 0 6 8 12 8M4 12c6 0 6-4 12-4M4 17c6 0 6-7 12-7M4 17h12" stroke="#797775" strokeWidth="1.200" />
    <path d="M1 1h3v4H1z" fill="#56a27c" stroke="none" /><path d="M1 7h3v6H1z" fill="#3f7fbf" stroke="none" />
    <path d="M1 15h3v4H1z" fill="#8ab0d8" stroke="none" /><path d="M16 1h3v11h-3z" fill="#e88a3a" stroke="none" />
    <path d="M16 14h3v5h-3z" fill="#d1533a" stroke="none" />
  </Svg>
);

function Well({ name }) {
  return (
    <div className="h-[31px] border border-dashed border-[#c8c6c4] bg-white px-[2px] py-[3px]">
      <div className="flex h-full items-center rounded-[2px] border border-[#c8c6c4] bg-[#edebe9] pr-[3px] pl-1 text-[11px] leading-4">
        {name}
        <button aria-label={`${name} options`} className="mr-[5px] ml-auto"><Chevron w={12} h={7} stroke="#4a7ba6" sw={0.9} /></button>
        <button aria-label={`Remove ${name}`}>
          <Svg w={9} sw={1}><path d="m.5.5 8 8M8.500.5l-8 8" /></Svg>
        </button>
      </div>
    </div>
  );
}

function VisualizationsPane() {
  return (
    <aside className="flex w-[181px] shrink-0 flex-col border-r border-[#e1dfdd] bg-[#f3f2f1] text-[#252423]">
      <div className="flex h-[38px] shrink-0 items-center justify-between px-2">
        <h2 className="text-[15px] font-semibold">Visualizations</h2>
        <button aria-label="Collapse visualizations"><DoubleChevron /></button>
      </div>
      <h3 className="h-[19px] pl-2 text-[11px] leading-4 font-semibold">Build visual</h3>
      <div className="flex h-8 items-center justify-between px-2">
        <button aria-label="Build visual" className="flex h-8 w-8 items-center justify-center rounded-[2px] bg-[#d2d0ce]">
          <Svg w={24} h={26}>
            <path d="M0 1.500h19" />
            <path d="M.6 6.600h22.800v6.800H.6zM.6 17.600h22.800v6.800H.6z" fill="#117865" strokeWidth="1.400" strokeDasharray="2 1.200" />
          </Svg>
        </button>
        <button aria-label="Format visual">
          <Svg w={24} h={24}>
            <path d="M1.500 19V9.500h5V1.500h5.500v6h7.500M6.500 9v9M12 7.500V14" />
            <path d="M22.500 8 12 16.500l2.500 3zM12 16.500c-4 0-3 4.500-7 5 4 2 9 1.500 9.500-2" fill="#f3f2f1" />
          </Svg>
        </button>
        <button aria-label="Analytics" className="mr-1">
          <Svg w={25} h={25}>
            <circle cx="11" cy="11" r="9.500" fill="#fff" />
            <path d="m2 12 6-5 4 3.500L20 5M5 18v-5M9 20v-8M13 20v-5M17 18v-7" />
            <path d="m18 18 6 6" strokeWidth="2.800" />
          </Svg>
        </button>
      </div>
      <svg viewBox="0 0 180 14" preserveAspectRatio="none" className="block h-[14px] w-full shrink-0" fill="none" stroke="#a19f9d" aria-hidden="true">
        <path d="M0 12.500h16L24 4.500l8 8h148" />
      </svg>
      <div className="mx-[6px] mt-[5px] grid grid-cols-6 border-b border-dashed border-[#c8c6c4] pb-px">
        {vizIcons.map((icon, i) => (
          <button key={i} aria-label={`Visual type ${i + 1}`} className="flex h-7 items-center justify-center">
            <Svg w={18} h={18} vb="0 0 19 19" sw={1.2} className="overflow-visible">{icon}</Svg>
          </button>
        ))}
      </div>
      <div className="mx-[6px] mb-1 grid grid-cols-6 pt-[3px]">
        {customIcons.map((icon, i) => (
          <button key={i} aria-label={`Custom visual ${i + 1}`} className="flex h-7 items-center justify-center">
            <Svg w={18}>{icon}</Svg>
          </button>
        ))}
        <button aria-label="Sankey" className="m-auto flex h-6 w-6 items-center justify-center border border-[#605e5c] bg-[#d2d0ce]">
          <SankeyGlyph />
        </button>
      </div>
      <div className="mb-2 flex min-h-0 flex-1 basis-0 border-t border-[#d2d0ce]">
        <div className="w-full overflow-hidden pl-1 text-[11px]">
          <div className="h-[19px] pl-2 leading-[15px]">Source</div>
          <Well name="Category" />
          <div className="h-[31px] pt-[9px] pl-2 leading-[18px]">Destination</div>
          <Well name="Market" />
          <div className="h-[31px] pt-[9px] pl-2 leading-[18px]">Weight</div>
          <div className="h-[31px] border border-dashed border-[#c8c6c4] bg-white pl-[10px] leading-[28px]">Add data fields here</div>
        </div>
        <div className="mt-[7px] h-[74px] w-[6px] shrink-0 rounded-full bg-[#d2d0ce]" />
      </div>
    </aside>
  );
}

const fields = [
  ["Discount", "sum"], ["Market", "", true], ["Order Date", "date"], ["Order ID"], ["Order Priority"],
  ["Postal Code", "sum"], ["Product ID"], ["Product Name"], ["Profit", "sum"], ["Quantity", "sum"],
  ["Region"], ["Row ID", "sum"], ["Sales", "sum"], ["Segment"], ["Ship Date", "date"], ["Ship Mode"],
  ["Shipping Cost", "sum"], ["State"], ["Sub-Category"],
];

function DataPane() {
  return (
    <aside className="flex w-[180px] shrink-0 flex-col bg-[#f3f2f1] text-[#252423]">
      <div className="flex h-[38px] shrink-0 items-center justify-between px-2">
        <h2 className="text-[15px] font-semibold">Data</h2>
        <button aria-label="Collapse data"><DoubleChevron /></button>
      </div>
      <label className="mx-1 mt-[7px] mb-[6px] flex h-[27px] shrink-0 items-center gap-[6px] rounded-[2px] border border-[#8a8886] bg-[#f3f2f1] px-2">
        <SearchIcon w={14} />
        <input aria-label="Search data" placeholder="Search" className="w-full bg-transparent pt-px text-xs outline-none placeholder:text-[#605e5c]" />
      </label>
      <div className="mb-2 flex min-h-0 flex-1 basis-0">
        <ul className="flex-1 overflow-hidden text-[11px] text-[#484644]">
          {fields.map(([name, kind, on]) => (
            <li key={name} className="flex h-6 items-center pl-[22px]">
              <span className="flex w-4 shrink-0 pl-px">
                {kind === "date" && <Svg w={9} h={12} stroke="#797775" sw={1.1}><path d="m1.500 0 6 6-6 6" /></Svg>}
              </span>
              <label className="flex items-center">
                <span className="relative flex">
                  <input type="checkbox" defaultChecked={!!on} className="h-3 w-3 appearance-none rounded-[2px] border border-[#797775] checked:border-[#117865] checked:bg-[#117865]" />
                  {on && <Svg w={12} stroke="#fff" sw={1.4} className="pointer-events-none absolute top-0 left-0"><path d="m2.500 6 2.500 2.500 4.500-5" /></Svg>}
                </span>
                <span className="ml-2 flex w-[18px]">
                  {kind === "sum" && <Svg w={12} h={12}><path d="M10.500 3V.8H1.200L6 6l-4.800 5.200h9.300V9" /></Svg>}
                  {kind === "date" && (
                    <Svg w={12} h={12}>
                      <rect x=".6" y=".6" width="10.800" height="10.800" rx="2" /><path d="M.6 3.500h10.800" />
                      <path d="M3 6h6.500M3 8.500h6.500" strokeDasharray="1.300 1.200" />
                    </Svg>
                  )}
                </span>
                <span className="pt-[2px] whitespace-nowrap">{name}</span>
              </label>
            </li>
          ))}
        </ul>
        <div className="mt-auto mr-1 h-3/4 w-2 bg-[#c8c6c4]" />
      </div>
    </aside>
  );
}

function ViewRail() {
  return (
    <nav className="flex w-[41px] shrink-0 flex-col border-r border-[#e1dfdd] bg-[#f3f2f1]">
      <button aria-label="Report view" className="flex h-10 items-center justify-center border-l-[3px] border-[#117865] pr-[2px]">
        <Svg w={14} h={14} stroke="#252423">
          <path d="M.7 0v13.300H14M3 6h2v5H3zM6.500 3h2v8h-2zM10 4.500h2V11h-2z" />
        </Svg>
      </button>
      <button aria-label="Table view" className="flex h-10 items-center justify-center">
        <Svg w={16} h={15} stroke="#797775"><path d="M.7.7h14.600v13.600H.7zM.7 5h14.600M.7 9.500h14.600M5.500.7v13.600M10.500.7v13.600" /></Svg>
      </button>
      <button aria-label="Model view" className="flex h-10 items-center justify-center">
        <Svg w={18} h={18} stroke="#797775"><path d="M1 2h6v5H1zM1 11h6v5H1zM12 1h5v4h-5zM12 7h5v4h-5zM12 13h5v4h-5zM7 4.500h2.500V15H12M9.500 9H12M9.500 4.500V3H12M7 13.500h2" /></Svg>
      </button>
    </nav>
  );
}

function StatusBar() {
  return (
    <div className="flex h-[25px] shrink-0 items-center border-t border-[#e1dfdd] bg-[#f3f2f1] pr-[10px] pl-1 text-[11px] text-[#484644]">
      <span className="pt-[2px]">Page 1 of 1</span>
      <button aria-label="Zoom out" className="ml-auto"><Svg w={5} h={10} sw={1.6}><path d="M0 5.500h5" /></Svg></button>
      <span className="relative mr-[7px] ml-1 flex h-4 w-[100px] items-center">
        <input
          type="range"
          aria-label="Zoom level"
          defaultValue={27}
          className="h-px w-full appearance-none bg-[#605e5c] [&::-webkit-slider-thumb]:h-[11px] [&::-webkit-slider-thumb]:w-1 [&::-webkit-slider-thumb]:appearance-none [&::-webkit-slider-thumb]:bg-[#605e5c]"
        />
        <span className="absolute top-[5px] left-[51px] h-[6px] w-px bg-[#605e5c]" />
      </span>
      <button aria-label="Zoom in"><Svg w={8} h={8}><path d="M4 0v8M0 4h8" /></Svg></button>
      <span className="ml-[13px]">60%</span>
      <button aria-label="Fit to page" className="mr-[14px] ml-[20px]">
        <Svg w={16} h={12} stroke="#605e5c"><path d="M.6.600h14.800v10.800H.6zM3 5V3h2M3 7.500V9h2M11 3h2v2M11 9h2V7.500" /></Svg>
      </button>
      <a href="#update" className="pt-[2px]">Update available (click to download)</a>
    </div>
  );
}

function Taskbar() {
  return (
    <footer className="flex h-10 shrink-0 items-center bg-linear-to-r from-[#cfe6ee] via-[#d0e4ed] to-[#d5dae9] text-[12px] text-black">
      <button aria-label="Start" className="flex w-12 justify-center">
        <Svg w={16}><path d="M0 2.300 7 1.300v6.300H0zM8 1.200 16 0v7.600H8zM0 8.500h7v6.300l-7-1zM8 8.500h8V16l-8-1.200z" fill="#000" stroke="none" /></Svg>
      </button>
      <label className="flex h-10 w-72 items-center gap-3 border border-[#c0cdd3] bg-white px-[11px]">
        <SearchIcon stroke="#000" />
        <input aria-label="Type here to search" placeholder="Type here to search" className="w-full bg-transparent pt-px text-sm outline-none placeholder:text-[#3b3a39]" />
      </label>
      <button aria-label="Task view" className="flex w-12 justify-center">
        <Svg w={16} stroke="#000"><path d="M.7 3V0M10.300 3V0M.7 16v-3M10.300 16v-3M.7 3h9.600M.7 5h9.600v6H.7zM.7 13h9.600M15 0v4M15 8v8" /><path d="M13.500 5h3v3h-3z" fill="#000" stroke="none" /></Svg>
      </button>
      <button aria-label="Edge" className="flex w-[54px] justify-center">
        <Svg w={24}>
          <path d="M0 13C0 5 5 0 12 0s12 4 12 10c0 4-3 6-7 6-3 0-4-1-3-3 0-3-2-5-5-5-4 0-9 3-9 5z" fill="#2bb5c4" stroke="none" />
          <path d="M12 0c7 0 12 4 12 10 0 4-3 6-7 6 3-3 4-11-5-16z" fill="#5bd368" stroke="none" />
          <path d="M0 13c0-3 5-6 9-6 3 0 5 3 5 6-2-1-4 1-3 4 1 4 6 5 11 2-2 3-6 5-10 5C5 24 0 19 0 13z" fill="#1464b4" stroke="none" />
          <path d="M14 12c-1 2 0 4 3 4 2 0 4 0 5-1-2 4-6 5-9 3-2-2-2-5 1-6z" fill="#eaf5fa" stroke="none" />
          <path d="M0 16h13v8H0z" fill="#b86b16" stroke="none" /><path d="M0 16h13v3H0z" fill="#7b430b" stroke="none" />
          <path d="M5.500 18h2v3h-2z" fill="#f7c14d" stroke="none" />
        </Svg>
      </button>
      <button aria-label="File Explorer" className="mr-1 ml-[2px] flex h-10 w-10 items-center justify-center border-b-2 border-[#0078d7]">
        <Svg w={22} h={20}>
          <path d="M0 0h9l2 3v16H0z" fill="#dd9f1d" stroke="none" /><path d="M0 4h22v14H0z" fill="#fcd462" stroke="none" />
          <path d="M4 10h14v8H4z" fill="#3a96dd" stroke="none" /><path d="M8 14h6v5H8z" fill="#fcd462" stroke="none" />
        </Svg>
      </button>
      <button aria-label="Mail" className="ml-px flex w-12 justify-center">
        <Svg w={24}>
          <path d="M0 9 12 1l12 8v14H0z" fill="#0f5fa8" stroke="none" /><path d="M2 8h20v10H2z" fill="#fff" stroke="none" />
          <path d="M0 9l12 8 12-8v14H0z" fill="#29a8e8" stroke="none" /><path d="M0 23 24 9v14z" fill="#1b8ad0" stroke="none" />
        </Svg>
      </button>
      <button aria-label="Firefox" className="flex w-[50px] justify-center">
        <Svg w={24}>
          <path d="M12 24A11.500 11.500 0 0 1 1 10C2 7 3 6 4 4l2 3c2-2 4-1 5-2l3-1 2-4c2 4 7 5 7 12 0 7-5 12-11 12z" fill="#ff6b2c" stroke="none" />
          <path d="M16 0c2 4 7 5 7 12 0 5-2 8-5 10 2-5 1-12-4-16z" fill="#ffd43a" stroke="none" />
          <path d="M1 14c2 6 8 8 13 7-4 3-8 3-10 0-2-1-3-5-3-7z" fill="#ee2b6a" stroke="none" />
          <circle cx="12" cy="12.500" r="5.500" fill="#7442c8" stroke="none" /><path d="M4 8c4-3 8 0 9 2-3 0-4 2-3 4-3 0-6-2-6-6z" fill="#ff9a2e" stroke="none" />
        </Svg>
      </button>
      <button aria-label="Power BI" className="flex h-10 w-12 items-center justify-center border-b-2 border-[#0078d7] bg-[#edf5f8]">
        <Svg w={20} h={24}>
          <rect x="11" y="0" width="9" height="24" rx="1" fill="#d79a12" stroke="none" />
          <rect x="5" y="6" width="9" height="18" rx="1" fill="#e9b92e" stroke="none" />
          <rect x="0" y="12" width="9" height="12" rx="1" fill="#fad960" stroke="none" />
        </Svg>
      </button>
      <div className="ml-auto flex items-center whitespace-nowrap">
        <Svg w={22} h={20}>
          <circle cx="11" cy="10" r="10" fill="#ffb21a" stroke="none" /><path d="M1.500 12.500h19A10 10 0 0 1 2 14z" fill="#f07818" stroke="none" />
          <path d="M0 6h12M8 9.500h14M2 13.500h14M0 10h5M15 5.500h6M10 17h7" stroke="#f9dca6" strokeWidth="1" />
        </Svg>
        <span className="ml-[9px] text-[13px]">24°C</span>
        <span className="ml-2 text-[13px]">Haze</span>
      </div>
      <div className="ml-[29px] flex shrink-0 items-center gap-4">
        <Chevron w={12} h={7} stroke="#000" sw={1.1} className="rotate-180" />
        <Svg w={16} h={16} stroke="#000" className="ml-[2px]"><path d="M4 2c2-2 6-2 8 0M4 14c2 2 6 2 8 0M3.500 4.500h6v7h-6zM9.500 7l3-2v6l-3-2" /></Svg>
        <Svg w={16} h={16} stroke="#000"><path d="M1 2.500 15.500 1v10M1 2v10l8 2M5.500 8.500V5.500h3M10 4l2 .5-1 2.500M11 8l-3 2.500" /><circle cx="12.500" cy="12.500" r="3.500" fill="#ff9500" stroke="none" /></Svg>
        <Svg w={16} h={14} stroke="#000"><path d="M7 3.500h7.500v8H5M14.500 6h1.500v3h-1.500M.7 2v2.500q2 3 4 0V2zM1.700 2V0M3.700 2V0M2.700 6.500v4H5" /><path d="M7 5.500h6v4H6z" fill="#000" stroke="none" /></Svg>
        <Svg w={16} h={16} stroke="#000"><path d="M14 7A7 7 0 1 0 8 15M1 5.500h13M1 10.500h7M7.500 1c-4 4-4 10 0 14M7.500 1c2 2 3 4 3 6" /><circle cx="12.500" cy="12" r="3.300" /><path d="m10.500 10 4 4" /></Svg>
        <Svg w={16} h={14} stroke="#000" sw={1.1}><path d="M.6 5h3l4-4v12l-4-4h-3zM9.500 4.500q2 2.500 0 5M11.500 3q3 4 0 8M13 1.500q4 5.500 0 11" /></Svg>
        <Svg w={16} h={16} stroke="#000" className="ml-1"><path d="M4.500 8c-4-1-5 5.500-1 6 4 .5 4-6 7-11.500 1-1.500 3-.5 2 1.500L7.500 13l-1 1.500M12 7c2-2 4-1 3 1s-3 3-4.500 2" /></Svg>
      </div>
      <span className="ml-[18px] pt-px text-[11px]">ENG</span>
      <div className="ml-[13px] text-center text-[11px] leading-[18px] whitespace-nowrap">23:00<br />25-01-2024</div>
      <button aria-label="Notifications" className="relative mr-[10px] ml-[19px]">
        <Svg w={24} h={24} className="overflow-visible">
          <path d="M1 4h15v11h-5l-3 3v-3H1z" fill="#000" stroke="none" />
          <path d="M3.500 7h10M3.500 9.500h10M3.500 12h6" stroke="#d5dae9" strokeWidth="1" />
          <circle cx="16.500" cy="18" r="7.500" fill="#c9ccd3" stroke="#797775" />
          <text x="16.500" y="22" textAnchor="middle" fontSize="11" fontFamily="Open Sans, sans-serif" fill="#000" stroke="none">1</text>
        </Svg>
      </button>
      <span className="h-10 border-l border-[#9aa3b3] pr-[6px]" />
    </footer>
  );
}

export default function App() {
  return (
    <div className="flex h-screen min-h-[640px] flex-col overflow-hidden font-['Open_Sans','Noto_Sans',sans-serif]">
      <TitleBar />
      <TabRow />
      <Ribbon />
      <main className="flex min-h-0 flex-1">
        <ViewRail />
        <div className="flex min-w-0 flex-1 flex-col">
          <div className="flex min-h-0 flex-1">
            <Canvas />
            <FiltersPane />
          </div>
          <PageTabs />
        </div>
        <VisualizationsPane />
        <DataPane />
      </main>
      <StatusBar />
      <Taskbar />
    </div>
  );
}
